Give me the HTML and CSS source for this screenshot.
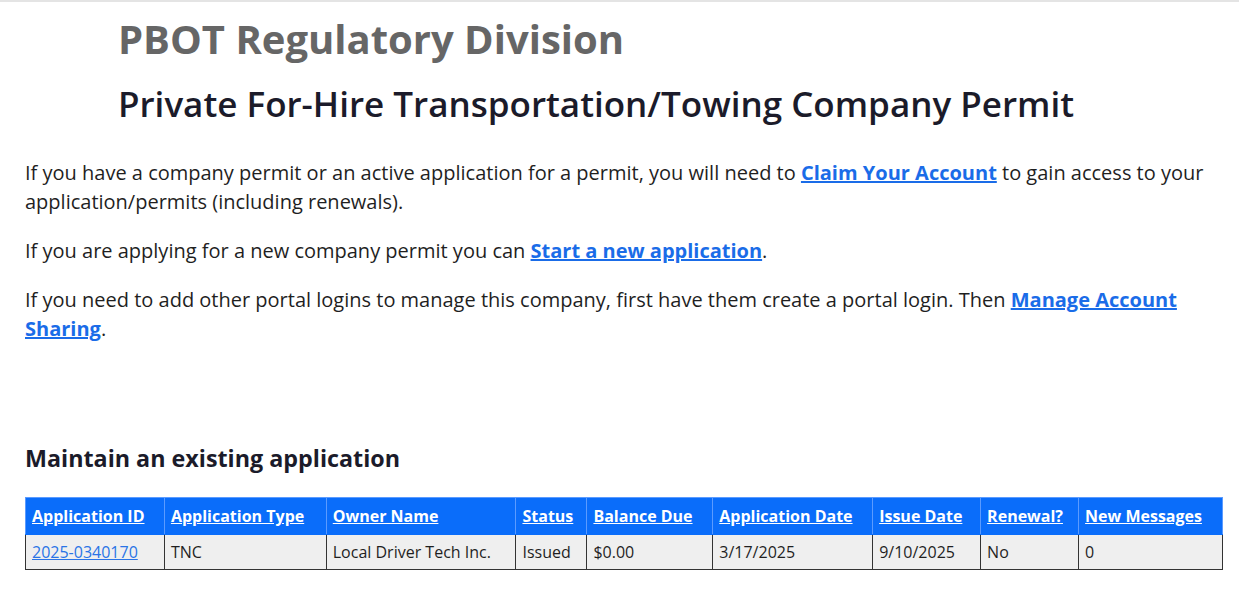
FILE: index.html
```html
<!DOCTYPE html>
<html lang="en">
<head>
<meta charset="utf-8">
<title>Private For-Hire Transportation/Towing Company Permit</title>
<link rel="stylesheet" href="styles.css">
</head>
<body>
<header class="page-head">
  <h1 class="division">PBOT Regulatory Division</h1>
  <h2 class="permit-title">Private For-Hire Transportation/Towing Company Permit</h2>
</header>
<main class="content">
  <p class="intro">If you have a company permit or an active application for a permit, you will need to <a href="#" class="action">Claim Your Account</a> to gain access to your application/permits (including renewals).</p>
  <p class="intro">If you are applying for a new company permit you can <a href="#" class="action">Start a new application</a>.</p>
  <p class="intro">If you need to add other portal logins to manage this company, first have them create a portal login. Then <a href="#" class="action">Manage Account Sharing</a>.</p>

  <h3 class="section-title">Maintain an existing application</h3>
  <table class="apps">
    <colgroup>
      <col class="c-id"><col class="c-type"><col class="c-owner"><col class="c-status"><col class="c-bal"><col class="c-adate"><col class="c-idate"><col class="c-ren"><col class="c-msg">
    </colgroup>
    <thead>
      <tr>
        <th><a href="#">Application ID</a></th>
        <th><a href="#">Application Type</a></th>
        <th><a href="#">Owner Name</a></th>
        <th><a href="#">Status</a></th>
        <th><a href="#">Balance Due</a></th>
        <th><a href="#">Application Date</a></th>
        <th><a href="#">Issue Date</a></th>
        <th><a href="#">Renewal?</a></th>
        <th><a href="#">New Messages</a></th>
      </tr>
    </thead>
    <tbody>
      <tr>
        <td><a href="#" class="rec">2025-0340170</a></td>
        <td>TNC</td>
        <td>Local Driver Tech Inc.</td>
        <td>Issued</td>
        <td>$0.00</td>
        <td>3/17/2025</td>
        <td>9/10/2025</td>
        <td>No</td>
        <td>0</td>
      </tr>
    </tbody>
  </table>
</main>
</body>
</html>
```

FILE: styles.css
```css
html, body {
  margin: 0;
  padding: 0;
  background: #fff;
}

body {
  font-family: "Open Sans", "Liberation Sans", sans-serif;
  color: #1f1f1f;
  border-top: 2px solid #e4e4e4;
}

.page-head {
  padding: 11px 0 0 118px;
}

.division {
  margin: 0;
  font-size: 40px;
  line-height: 52px;
  font-weight: 700;
  color: #666;
}

.permit-title {
  margin: 17px 0 0;
  font-size: 35px;
  line-height: 44px;
  font-weight: 600;
  color: #1b1b2a;
}

.content {
  padding: 32px 16px 0 25px;
}

.intro {
  margin: 0 0 20px;
  font-size: 20px;
  line-height: 29px;
  color: #1f1f1f;
}

.action {
  color: #1a6ce8;
  font-weight: 700;
}

.section-title {
  margin: 98px 0 0;
  font-size: 23.3px;
  line-height: 34px;
  font-weight: 700;
  color: #1b1b2a;
}

.apps {
  margin-top: 22px;
  width: 1198px;
  border-collapse: collapse;
  font-size: 16px;
}

.c-id { width: 139px; }
.c-type { width: 162px; }
.c-owner { width: 190px; }
.c-status { width: 71px; }
.c-bal { width: 126px; }
.c-adate { width: 160px; }
.c-idate { width: 108px; }
.c-ren { width: 98px; }
.c-msg { width: 144px; }

.apps th {
  background: #0a6dfa;
  color: #fff;
  text-align: left;
  font-weight: 700;
  height: 36px;
  padding: 0 6px;
  border: 1px solid #5b9bff;
  border-bottom: 1px solid #0a6dfa;
}

.apps th a {
  color: #fff;
}

.apps td {
  background: #efefef;
  height: 34px;
  padding: 0 6px;
  border: 1px solid #333;
  border-top: none;
}

.apps td .rec {
  color: #2a74e6;
}
```
